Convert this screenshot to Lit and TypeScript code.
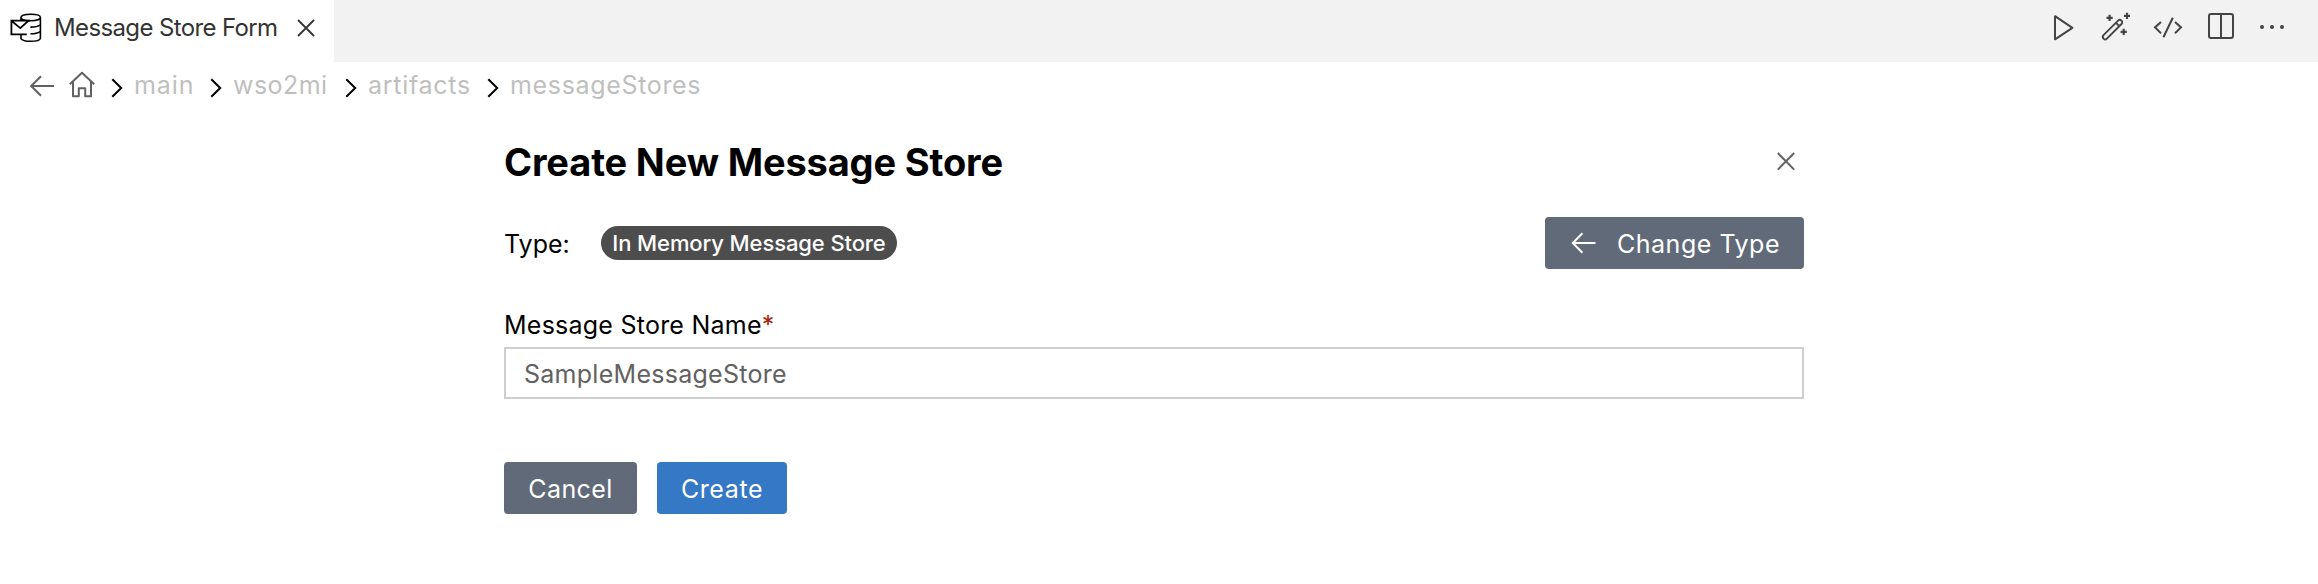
import { LitElement, html, css } from "lit";
import { customElement } from "lit/decorators.js";

const CRUMBS = [
  { name: "main", cls: "c-main" },
  { name: "wso2mi", cls: "c-project" },
  { name: "artifacts", cls: "c-artifacts" },
  { name: "messageStores", cls: "c-stores" },
];

const chevron = html`<svg class="chevron" width="12" height="20" viewBox="0 0 12 20"><path d="M1.3 1.2 10.2 10 1.3 18.8" /></svg>`;

@customElement("editor-header")
export class EditorHeader extends LitElement {
  static styles = css`
    :host { display: flex; justify-content: space-between; height: 62px; background: #f2f2f2; }
    svg { display: block; fill: none; stroke: #444; stroke-width: 2; flex: none; }
    .tab { display: flex; align-items: center; box-sizing: border-box; width: 334px; height: 62px; padding: 0 0 6px 10px; background: #fff; }
    .store { stroke: #000; }
    .name { margin-left: 12px; width: 224px; font-size: 24px; line-height: 30px; letter-spacing: -0.63px; color: #333; white-space: nowrap; }
    .close { margin-left: 19px; stroke: #333; stroke-width: 1.8; }
    .actions { display: flex; align-items: center; height: 54px; gap: 21px; padding-right: 29px; }
    .dots { fill: #444; stroke: none; }
  `;
  render() {
    return html`
      <div class="tab">
        <svg class="store" width="32" height="30" viewBox="0 0 32 30">
          <path d="M11 7.4V4.6M11 21.5V25.6C12 27.3 15.5 28.3 20.5 28.3S30 27.2 30.4 25.4V4.4M11 4.2C11 2.5 15 1.2 20.7 1.2S30.4 2.5 30.4 4.4 26.4 7.7 20.7 7.7 11 6.3 11 4.2Z" stroke-width="1.6" />
          <path d="M30 12C28.5 13.2 25 14.1 20.4 14.1M30 18.6C28.5 19.8 25 20.8 20.4 20.8" stroke-width="1.6" />
          <path d="M20 7.6H1.4V21.3H16.8M1.4 7.8 10.3 15.1 18.2 8" stroke-width="1.8" />
        </svg>
        <span class="name">Message Store Form</span>
        <svg class="close" width="18" height="18" viewBox="0 0 18 18"><path d="M1 1 17 17M17 1 1 17" /></svg>
      </div>
      <div class="actions">
        <svg width="32" height="32" viewBox="-3 0 32 32"><path d="M7 5.2V28.3L24.4 16.8Z" stroke-linejoin="round" /></svg>
        <svg width="32" height="32" viewBox="-2.8 0 32 32">
          <path d="M2.7 24.2 17.3 9.6A2.4 2.4 0 0 1 20.7 13L6.1 27.6A2.4 2.4 0 0 1 2.7 24.2ZM15.2 11.9 18.4 15" stroke-width="1.9" />
          <path d="M8.8 3.8V10M5.7 6.9H11.9M26.2 1.8V8M23.1 4.9H29.3M22.9 17.8V24M19.8 20.9H26" stroke-width="2.2" />
        </svg>
        <svg width="32" height="32" viewBox="0 0 32 32"><path d="M10 11 4 16.4 10 22.2M24 11 30 16.4 24 22.2M21.8 6.8 12.4 26.2" /></svg>
        <svg width="32" height="32" viewBox="0 0 32 32"><rect x="5" y="3" width="24" height="24" rx="2" /><path d="M17 3V27" /></svg>
        <svg class="dots" width="32" height="32" viewBox="0 0 32 32"><circle cx="5" cy="16" r="2" /><circle cx="15" cy="16" r="2" /><circle cx="25" cy="16" r="2" /></svg>
      </div>
    `;
  }
}

@customElement("path-breadcrumb")
export class PathBreadcrumb extends LitElement {
  static styles = css`
    :host { display: flex; align-items: center; height: 48px; padding-left: 29px; color: #bfbfbf; font-size: 25px; line-height: 30px; }
    svg { display: block; fill: none; stroke: #616161; stroke-width: 2; flex: none; }
    .home { margin: -3px 0 0 14px; }
    .crumb { display: flex; align-items: center; white-space: nowrap; }
    .chevron { margin: 3px 0 0 16px; stroke: #000; }
    .name { margin: -2px 0 0 11px; }
    .c-main { width: 60px; letter-spacing: 0.9px; }
    .c-project { width: 96px; letter-spacing: 0.45px; }
    .c-artifacts { width: 103px; letter-spacing: 0.72px; }
    .c-stores { letter-spacing: 0.66px; }
  `;
  render() {
    return html`
      <svg width="26" height="22" viewBox="0 0 26 22"><path d="M25 11H2.4M12 1.2 2.2 11 12 20.8" /></svg>
      <svg class="home" width="26" height="27" viewBox="0 0 26 27"><path d="M.8 13.3 13 1.8 25.2 13.3M4 10.6V25.2H9.8V17.2H16.2V25.2H22V10.6" stroke-linejoin="round" /></svg>
      ${CRUMBS.map((c) => html`<span class="crumb">${chevron}<span class="name ${c.cls}">${c.name}</span></span>`)}
    `;
  }
}

@customElement("store-form")
export class StoreForm extends LitElement {
  static styles = css`
    :host { display: block; width: 1300px; margin: 28px auto 0 504px; font-size: 25px; line-height: 30px; white-space: nowrap; }
    svg { display: block; fill: none; stroke: #616161; stroke-width: 2; flex: none; }
    .title-row { display: flex; align-items: center; justify-content: space-between; height: 48px; padding-right: 8px; }
    h1 { margin: 0; font-size: 38px; line-height: 46px; font-weight: 700; letter-spacing: -0.15px; }
    .type-row { display: flex; align-items: center; height: 52px; margin-top: 31px; }
    .type { width: 97px; padding-top: 2px; }
    .badge { display: flex; align-items: center; justify-content: center; width: 296px; height: 34px; border-radius: 17px; background: #4d4d4d; color: #fff; font-size: 22px; font-weight: 500; letter-spacing: -0.1px; }
    button { display: flex; align-items: center; justify-content: center; box-sizing: border-box; height: 52px; padding: 2px 0 0; border: 0; border-radius: 4px; background: #616a79; color: #fff; font: inherit; }
    button svg { stroke: #fff; margin: -3px 21px 0 0; }
    .change { width: 259px; margin-left: auto; padding-left: 2px; letter-spacing: 0.53px; }
    label { display: block; margin-top: 41px; letter-spacing: 0.24px; }
    .required { color: #a1260d; }
    input { display: block; box-sizing: border-box; width: 1300px; height: 52px; margin-top: 7px; padding: 2px 18px 0; border: 2px solid #cecece; border-radius: 0; background: #fff; color: #616161; font: inherit; letter-spacing: 0.27px; outline: none; }
    .footer { display: flex; gap: 20px; margin-top: 63px; }
    .cancel { width: 133px; letter-spacing: 0.4px; }
    .create { width: 130px; background: #3478c6; letter-spacing: 0.6px; }
  `;
  render() {
    return html`
      <div class="title-row">
        <h1>Create New Message Store</h1>
        <svg width="20" height="20" viewBox="0 0 20 20"><path d="M1.8 1 18.2 17.6M18.2 1 1.8 17.6" /></svg>
      </div>
      <div class="type-row">
        <span class="type">Type:</span>
        <span class="badge">In Memory Message Store</span>
        <button class="change">
          <svg width="25" height="22" viewBox="0 0 25 22"><path d="M24.5 11H2M11.4 1.2 1.8 11 11.4 20.8" /></svg>
          Change Type
        </button>
      </div>
      <label>Message Store Name<span class="required">*</span></label>
      <input type="text" value="SampleMessageStore" />
      <div class="footer">
        <button class="cancel">Cancel</button>
        <button class="create">Create</button>
      </div>
    `;
  }
}

@customElement("app-root")
export class AppRoot extends LitElement {
  static styles = css`
    :host { display: block; height: 584px; background: #fff; overflow: hidden; font-family: Inter, "Liberation Sans", sans-serif; color: #000; }
  `;
  render() {
    return html`<editor-header></editor-header><path-breadcrumb></path-breadcrumb><store-form></store-form>`;
  }
}
